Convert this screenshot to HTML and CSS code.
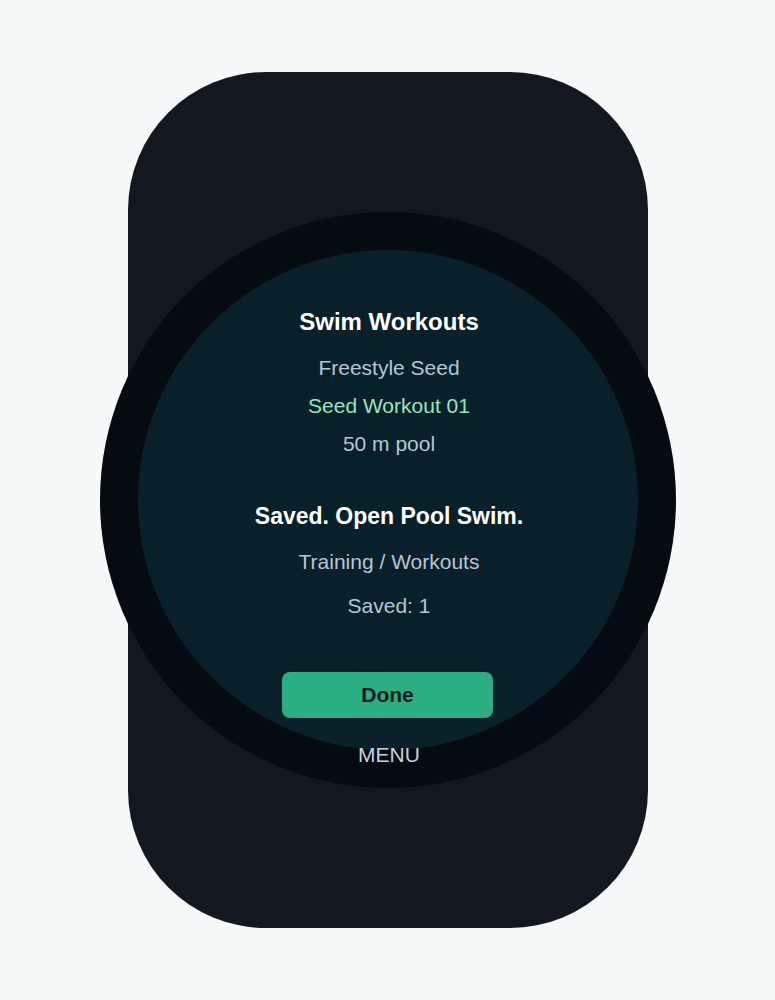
FILE: index.html
```html
<!DOCTYPE html>
<html lang="en">

<head>
    <meta charset="UTF-8">
    <meta name="viewport" content="width=device-width, initial-scale=1.0">
    <title>Swim Workouts</title>
    <link rel="stylesheet" href="styles.css">
</head>

<body>
    <div class="watch">
        <div class="bezel">
            <div class="face">
                <h1 class="title">Swim Workouts</h1>
                <p class="line first">Freestyle Seed</p>
                <p class="line highlight">Seed Workout 01</p>
                <p class="line">50 m pool</p>

                <h2 class="title status">Saved. Open Pool Swim.</h2>
                <p class="line first">Training / Workouts</p>
                <p class="line count">Saved: 1</p>

                <button class="done-btn">Done</button>
                <p class="menu">MENU</p>
            </div>
        </div>
    </div>
</body>

</html>
```

FILE: styles.css
```css
body {
    background-color: #f5f9f9;
    margin: 0;
    height: 1000px;
    display: flex;
    justify-content: center;
    align-items: center;
    font-family: "Liberation Sans", Arial, sans-serif;
}

.watch {
    background-color: #111820;
    width: 520px;
    height: 856px;
    border-radius: 138px;
    display: flex;
    justify-content: center;
    align-items: center;
}

.bezel {
    background-color: #040b11;
    width: 576px;
    height: 576px;
    border-radius: 50%;
    padding: 38px;
    box-sizing: border-box;
    flex-shrink: 0;
}

.face {
    background-color: #07202a;
    width: 500px;
    height: 500px;
    border-radius: 50%;
    display: flex;
    flex-direction: column;
    align-items: center;
    padding-top: 58px;
    box-sizing: border-box;
    text-align: center;
}

/* text sits a touch right of the button */
.title,
.line,
.menu {
    padding-left: 3px;
}

.title {
    color: #ffffff;
    font-size: 24px;
    line-height: 28px;
    font-weight: bold;
    margin: 0;
}

.status {
    font-size: 23px;
    margin-top: 45px;
}

.line {
    color: #b6c7d3;
    font-size: 21px;
    line-height: 26px;
    margin: 12px 0 0;
}

.line.first {
    margin-top: 19px;
}

.line.count {
    margin-top: 18px;
}

.highlight {
    color: #95e6c1;
}

.done-btn {
    margin-top: 53px;
    width: 211px;
    height: 46px;
    background-color: #2aae82;
    color: #0b1a21;
    border: none;
    border-radius: 8px;
    font-family: inherit;
    font-size: 21px;
    font-weight: bold;
    cursor: pointer;
    flex-shrink: 0;
}

.menu {
    color: #c3d2dd;
    font-size: 21px;
    line-height: 26px;
    margin: 24px 0 0;
}
```
